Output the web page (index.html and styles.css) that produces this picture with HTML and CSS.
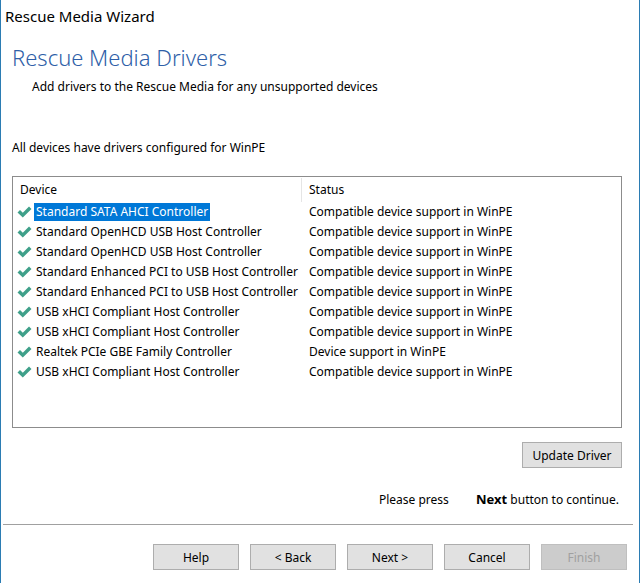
FILE: index.html
```html
<!DOCTYPE html>
<html>
<head>
<meta charset="utf-8">
<link rel="stylesheet" href="styles.css">
</head>
<body>
<div class="window">
  <div class="titlebar">Rescue Media Wizard</div>
  <div class="header">
    <h1 class="heading">Rescue Media Drivers</h1>
    <p class="subtitle">Add drivers to the Rescue Media for any unsupported devices</p>
  </div>
  <p class="info">All devices have drivers configured for WinPE</p>
  <div class="listbox">
    <div class="list-head">
      <div class="col-device">Device</div>
      <div class="col-status">Status</div>
    </div>
    <div class="rows" id="rows"></div>
  </div>
  <div class="update-row">
    <button class="btn">Update Driver</button>
  </div>
  <div class="press-row">
    <span class="press">Please press</span>
    <span><b>Next</b> button to continue.</span>
  </div>
  <div class="separator"></div>
  <div class="buttons">
    <button class="btn">Help</button>
    <button class="btn">&lt; Back</button>
    <button class="btn">Next &gt;</button>
    <button class="btn">Cancel</button>
    <button class="btn disabled">Finish</button>
  </div>
</div>
<script src="script.js"></script>
</body>
</html>
```
FILE: script.js
```js
const data = [
  ["Standard SATA AHCI Controller", "Compatible device support in WinPE", true],
  ["Standard OpenHCD USB Host Controller", "Compatible device support in WinPE"],
  ["Standard OpenHCD USB Host Controller", "Compatible device support in WinPE"],
  ["Standard Enhanced PCI to USB Host Controller", "Compatible device support in WinPE"],
  ["Standard Enhanced PCI to USB Host Controller", "Compatible device support in WinPE"],
  ["USB xHCI Compliant Host Controller", "Compatible device support in WinPE"],
  ["USB xHCI Compliant Host Controller", "Compatible device support in WinPE"],
  ["Realtek PCIe GBE Family Controller", "Device support in WinPE"],
  ["USB xHCI Compliant Host Controller", "Compatible device support in WinPE"]
];
const check = '<svg class="check" width="15" height="12" viewBox="0 0 15 12"><path d="M0.5 6.5 L3 4 L5.8 6.8 L12 0.5 L14.5 3 L5.8 11.5 Z" fill="#3fa08a"/></svg>';
const rows = document.getElementById("rows");
rows.innerHTML = data.map(([d, s, sel]) =>
  `<div class="row"><div class="col-device">${check}<span class="name${sel ? ' selected' : ''}">${d}</span></div><div class="col-status">${s}</div></div>`
).join("");
```
FILE: styles.css
```css
html, body {
  margin: 0;
  padding: 0;
  background: #fff;
}
body {
  font-family: "Noto Sans", "Open Sans", sans-serif;
  font-size: 12px;
  color: #000;
}
.window {
  width: 638px;
  height: 583px;
  border-left: 1px solid #2b7cb3;
  border-right: 1px solid #2b7cb3;
  box-sizing: content-box;
  background: #fff;
  display: flex;
  flex-direction: column;
}
.titlebar {
  height: 32px;
  line-height: 32px;
  padding-left: 4px;
  font-size: 15px;
}
.header {
  padding-left: 11px;
}
.heading {
  margin: 10px 0 0;
  font-weight: 300;
  font-size: 22px;
  line-height: 30px;
  color: #2f5fa8;
}
.subtitle {
  margin: 6px 0 0 20px;
  line-height: 18px;
}
.info {
  margin: 43px 0 0 11px;
  line-height: 18px;
}
.listbox {
  margin: 19px 0 0 11px;
  width: 608px;
  height: 250px;
  border: 1px solid #8c8c8c;
}
.list-head {
  display: flex;
  height: 24px;
  line-height: 24px;
  margin-top: 1px;
}
.col-device {
  box-sizing: border-box;
  width: 289px;
  display: flex;
  align-items: center;
}
.list-head .col-device {
  padding-left: 7px;
  border-right: 1px solid #e5e5e5;
}
.col-status {
  padding-left: 7px;
}
.row {
  display: flex;
  height: 20px;
  line-height: 18px;
  align-items: center;
}
.row .col-device {
  padding-left: 4px;
}
.check {
  margin-right: 2px;
  flex: none;
}
.name {
  padding: 0 2px;
  white-space: nowrap;
}
.name.selected {
  background: #0078d7;
  color: #fff;
}
.update-row {
  display: flex;
  justify-content: flex-end;
  padding-right: 17px;
  margin-top: 14px;
}
.btn {
  font-family: inherit;
  font-size: 12px;
  height: 26px;
  width: 86px;
  background: #e1e1e1;
  border: 1px solid #adadad;
  color: #000;
  padding: 0;
}
.update-row .btn {
  width: 100px;
}
.press-row {
  margin-top: 22px;
  padding-left: 378px;
  line-height: 18px;
}
.press {
  margin-right: 24px;
}
.press-row b {
  font-size: 13px;
}
.separator {
  margin: 15px 6px 0 2px;
  height: 1px;
  background: #a0a0a0;
}
.buttons {
  display: flex;
  gap: 11px;
  padding-left: 152px;
  margin-top: 19px;
}
.btn.disabled {
  background: #cccccc;
  border-color: #bfbfbf;
  color: #a0a0a0;
}
```
